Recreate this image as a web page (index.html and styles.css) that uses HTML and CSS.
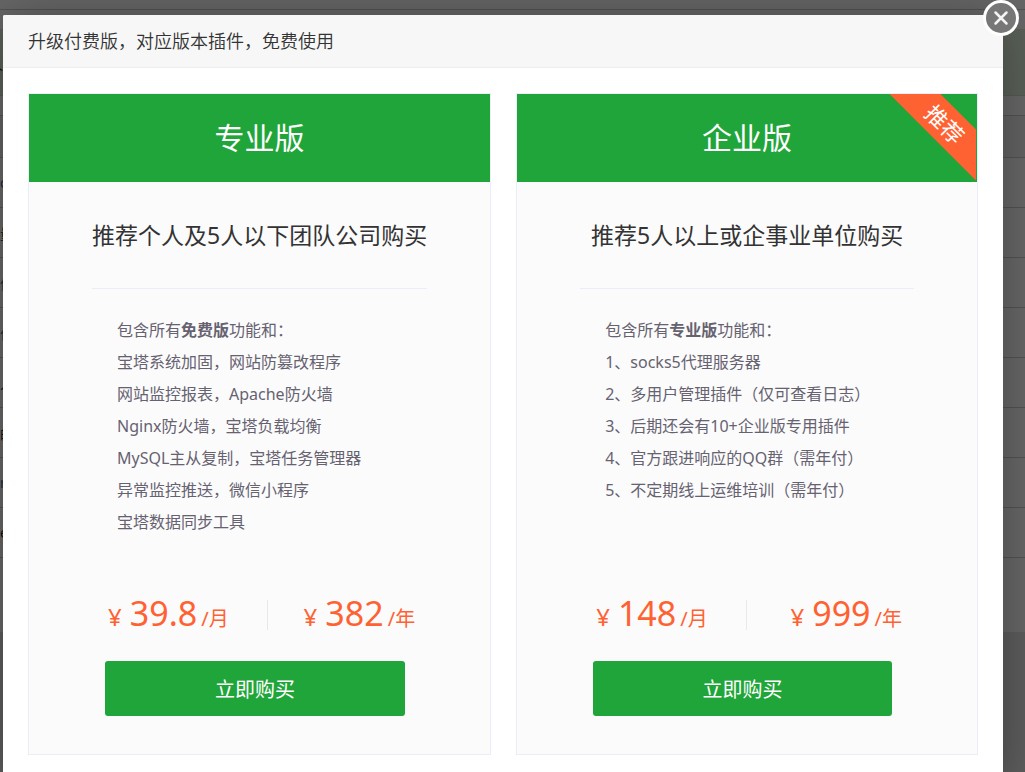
FILE: index.html
```html
<!DOCTYPE html>
<html lang="zh-CN">
  <head>
    <meta charset="UTF-8" />
    <meta name="viewport" content="width=device-width, initial-scale=1.0" />
    <title>升级付费版</title>
    <link rel="stylesheet" href="styles.css">
  </head>
  <body>
    <!-- Page behind the dialog -->
    <div class="page" aria-hidden="true">
      <div class="topbar"></div>
      <div class="notice">人</div>
      <table class="plugins">
        <thead>
          <tr><th></th></tr>
        </thead>
        <tbody>
          <tr><td><span class="link">or</span></td></tr>
          <tr><td>量</td></tr>
          <tr><td><span class="link">件</span></td></tr>
          <tr><td><span class="link">作</span></td></tr>
          <tr><td>人</td></tr>
          <tr><td>的</td></tr>
          <tr><td><span class="link">nu</span></td></tr>
          <tr><td>ew</td></tr>
        </tbody>
      </table>
    </div>

    <!-- Upgrade dialog -->
    <div class="shade">
      <div class="modal" role="dialog" aria-labelledby="modal-title">
        <h1 class="modal-title" id="modal-title">升级付费版，对应版本插件，免费使用</h1>
        <button class="close" type="button" aria-label="关闭">
          <svg viewBox="0 0 38 38" width="38" height="38">
            <circle cx="19" cy="19" r="16.5" fill="#777" stroke="#fff" stroke-width="3" />
            <path d="M13.5 13.5l11 11M24.5 13.5l-11 11" stroke="#f4f4f4" stroke-width="2.5" stroke-linecap="round" />
          </svg>
        </button>

        <div class="plans">
          <!-- Professional -->
          <section class="plan">
            <h2 class="plan-name">专业版</h2>
            <div class="plan-body">
              <p class="plan-for">推荐个人及5人以下团队公司购买</p>
              <ul class="features">
                <li>包含所有<b>免费版</b>功能和：</li>
                <li>宝塔系统加固，网站防篡改程序</li>
                <li>网站监控报表，Apache防火墙</li>
                <li>Nginx防火墙，宝塔负载均衡</li>
                <li>MySQL主从复制，宝塔任务管理器</li>
                <li>异常监控推送，微信小程序</li>
                <li>宝塔数据同步工具</li>
              </ul>
              <div class="prices">
                <div class="price month"><span class="yen">¥</span><span class="amount">39.8</span>/月</div>
                <div class="price"><span class="yen">¥</span><span class="amount">382</span>/年</div>
              </div>
              <button class="buy" type="button">立即购买</button>
            </div>
          </section>

          <!-- Enterprise -->
          <section class="plan">
            <h2 class="plan-name">企业版</h2>
            <div class="ribbon"><span>推荐</span></div>
            <div class="plan-body">
              <p class="plan-for">推荐5人以上或企事业单位购买</p>
              <ul class="features">
                <li>包含所有<b>专业版</b>功能和：</li>
                <li>1、socks5代理服务器</li>
                <li>2、多用户管理插件（仅可查看日志）</li>
                <li>3、后期还会有10+企业版专用插件</li>
                <li>4、官方跟进响应的QQ群（需年付）</li>
                <li>5、不定期线上运维培训（需年付）</li>
              </ul>
              <div class="prices">
                <div class="price month"><span class="yen">¥</span><span class="amount">148</span>/月</div>
                <div class="price"><span class="yen">¥</span><span class="amount">999</span>/年</div>
              </div>
              <button class="buy" type="button">立即购买</button>
            </div>
          </section>
        </div>
      </div>
    </div>
  </body>
</html>
```
FILE: styles.css
```css
:root {
  --green: #20a53a;
  --orange: #ff6232;
  --line: #ececfb;
  --text: #333;
  --muted: #666270;
}

* {
  margin: 0;
  padding: 0;
  box-sizing: border-box;
}

body {
  min-height: 100vh;
  overflow: hidden;
  background: #e6e6e6;
  color: var(--text);
  font-family: "Noto Sans", "Noto Sans CJK SC", sans-serif;
}

/* page behind */
.page {
  height: 632px;
  background: #fff;
  font-size: 14px;
  text-indent: -11px;
}

.topbar {
  height: 10px;
  margin-bottom: 19px;
  border-bottom: 1px solid #ccc;
}

.notice {
  height: 67px;
  margin-bottom: 19px;
  line-height: 72px;
  border-bottom: 1px solid #d0e0c8;
  background: #dff0d8;
}

.plugins {
  width: 100%;
  border-collapse: collapse;
}

.plugins th {
  height: 42px;
  border-top: 1px solid #ccc;
  background: #f4f4f4;
}

.plugins td {
  height: 50px;
  border-top: 1px solid #ccc;
}

.plugins tbody tr:last-child td {
  border-bottom: 1px solid #ccc;
}

.link {
  color: #4a6da8;
}

/* dialog */
.shade {
  position: fixed;
  inset: 0;
  overflow: hidden;
  padding: 15px 22px 0 3px;
  background: rgba(0, 0, 0, 0.6);
}

.modal {
  position: relative;
  min-height: 100vh;
  border-radius: 2px;
  background: #fff;
  box-shadow: 1px 1px 50px rgba(0, 0, 0, 0.3);
}

.modal-title {
  padding: 0 25px;
  border-bottom: 1px solid #eee;
  border-radius: 2px 2px 0 0;
  background: #f7f7f7;
  font-size: 18px;
  font-weight: 350;
  line-height: 52px;
}

.close {
  position: absolute;
  top: -16px;
  right: -17px;
  width: 38px;
  height: 38px;
  border: none;
  background: none;
  cursor: pointer;
}

.close svg {
  display: block;
}

.plans {
  display: grid;
  grid-template-columns: 1fr 1fr;
  gap: 25px;
  padding: 25px;
}

.plan {
  position: relative;
  border: 1px solid var(--line);
  background: #fbfbfc;
}

.plan-name {
  background: var(--green);
  color: #fff;
  font-size: 30px;
  font-weight: 400;
  line-height: 88px;
  text-align: center;
}

.ribbon {
  position: absolute;
  top: 0;
  right: 1px;
  width: 87px;
  height: 87px;
  overflow: hidden;
}

.ribbon span {
  position: absolute;
  top: 12px;
  right: -39px;
  width: 140px;
  background: var(--orange);
  color: #fff;
  font-size: 22px;
  line-height: 36px;
  text-align: center;
  transform: rotate(45deg);
}

.plan-body {
  padding: 0 63px 38px;
}

.plan-for {
  border-bottom: 1px solid var(--line);
  font-size: 23px;
  line-height: 106px;
  text-align: center;
  white-space: nowrap;
}

.features {
  min-height: 249px;
  padding: 25px 0 0 25px;
  color: var(--muted);
  font-size: 16px;
  line-height: 32px;
  list-style: none;
  white-space: nowrap;
}

.prices {
  display: flex;
  justify-content: space-between;
  margin-top: 62px;
  padding: 0 12px 0 16px;
}

.price {
  height: 30px;
  color: var(--orange);
  font-size: 20px;
  line-height: 26px;
  white-space: nowrap;
}

.price.month {
  padding-right: 38px;
  border-right: 1px solid #e8e8ee;
}

.yen {
  margin-right: 8px;
  font-size: 24px;
}

.amount {
  margin-right: 4px;
  font-size: 34px;
}

.buy {
  display: block;
  width: calc(100% - 35px);
  height: 55px;
  margin: 31px 0 0 13px;
  border: none;
  border-radius: 3px;
  background: var(--green);
  color: #fff;
  font-family: inherit;
  font-size: 20px;
  cursor: pointer;
}
```
